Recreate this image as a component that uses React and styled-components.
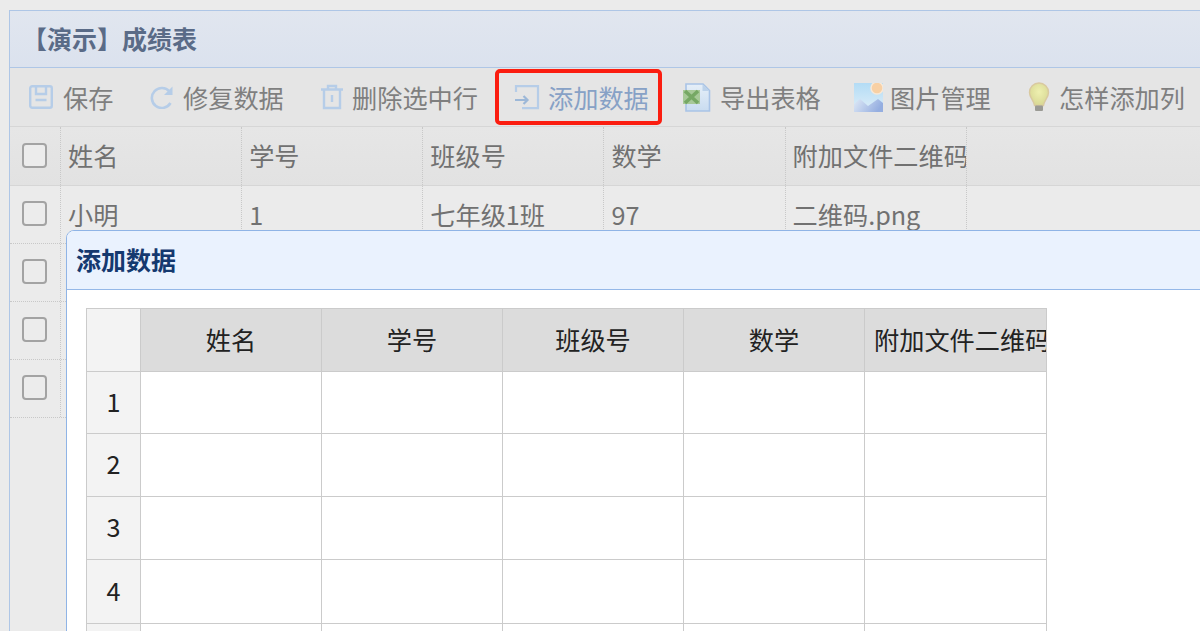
import React from 'react'
import styled, { createGlobalStyle } from 'styled-components'

const FONT = '"Noto Sans CJK SC", "Noto Sans", sans-serif'
const COLUMNS = ['姓名', '学号', '班级号', '数学', '附加文件二维码']
const STUDENT = ['小明', '1', '七年级1班', '97', '二维码.png']
const SHEET_ROWS = [
  { label: '1', height: 62 },
  { label: '2', height: 63 },
  { label: '3', height: 63 },
  { label: '4', height: 64 },
  { label: '', height: 63 },
]

const GlobalStyle = createGlobalStyle`
  html, body {
    margin: 0;
    height: 631px;
    overflow: hidden;
    background: #ebebeb;
    font-family: ${FONT};
  }
`

const Page = styled.div`
  position: relative;
  width: 1200px;
  height: 631px;
  padding: 10px 0 0 9px;
  box-sizing: border-box;
  overflow: hidden;
`

const Panel = styled.div`
  width: 1240px;
  height: 640px;
  box-sizing: border-box;
  border: 1px solid #aec6e6;
  background: #ebebeb;
`

const TitleBar = styled.div`
  height: 57px;
  box-sizing: border-box;
  padding: 0 0 2px 12px;
  display: flex;
  align-items: center;
  border-bottom: 1px solid #aec6e6;
  background: linear-gradient(to bottom, #e1e6ef, #dbe2ee);
  color: #5a6b87;
  font-size: 25px;
  font-weight: 700;
`

const Toolbar = styled.div`
  height: 59px;
  box-sizing: border-box;
  display: flex;
  align-items: center;
  border-bottom: 1px solid #d6d6d6;
  background: #e5e5e5;
`

const ToolButton = styled.div`
  position: relative;
  height: 100%;
  display: flex;
  align-items: center;
  flex: none;
  width: ${(p) => p.$width}px;
  padding-left: ${(p) => p.$pad}px;
  box-sizing: border-box;
  gap: ${(p) => p.$gap}px;
  font-size: 25.2px;
  white-space: nowrap;
  color: ${(p) => (p.$highlight ? '#87a1c6' : '#7f7f7f')};

  ${(p) =>
    p.$highlight &&
    `&::after {
      content: '';
      position: absolute;
      left: 0;
      top: 1px;
      width: 167px;
      height: 56px;
      box-sizing: border-box;
      border: 4px solid #fb1d10;
      border-radius: 5px;
    }`}

  svg {
    flex: none;
  }
`

const GridRow = styled.div`
  height: ${(p) => p.$height}px;
  box-sizing: border-box;
  display: flex;
  border-bottom: ${(p) => (p.$head ? '1px solid #d6d6d6' : '1px dotted #c8c8c8')};
  background: ${(p) => (p.$head ? 'linear-gradient(to bottom, #e6e6e6, #e2e2e2)' : '#ebebeb')};
  font-size: 25.2px;
  color: #717171;
`

const CheckCell = styled.div`
  width: 51px;
  flex: none;
  box-sizing: border-box;
  padding: 0 2px 2px 0;
  display: flex;
  align-items: center;
  justify-content: center;
  border-right: 1px dotted #c8c8c8;
`

const CheckBox = styled.span`
  width: 25px;
  height: 25px;
  box-sizing: border-box;
  border: 2px solid #a3a3a3;
  border-radius: 4px;
  background: #ececec;
`

const DataCell = styled.div`
  width: 181.15px;
  flex: none;
  box-sizing: border-box;
  padding: 0 0 2px 7px;
  display: flex;
  align-items: center;
  border-right: 1px dotted #c8c8c8;
  white-space: nowrap;
  overflow: hidden;
`

const Dialog = styled.div`
  position: absolute;
  left: 66px;
  top: 230px;
  width: 1200px;
  height: 460px;
  box-sizing: border-box;
  border: 1px solid #8fb4e6;
  border-radius: 8px 0 0 0;
  background: #fff;
  overflow: hidden;
`

const DialogTitle = styled.div`
  height: 59px;
  box-sizing: border-box;
  padding: 0 0 2px 9px;
  display: flex;
  align-items: center;
  border-bottom: 1px solid #95b8e8;
  background: #eaf2fe;
  color: #15396f;
  font-size: 25px;
  font-weight: 700;
`

const DialogBody = styled.div`
  padding: 18px 0 0 19px;
`

const Sheet = styled.table`
  border-collapse: collapse;
  table-layout: fixed;
  width: 960px;
  font-size: 25.2px;
  color: #222;
`

const Corner = styled.th`
  width: 54px;
  padding: 0;
  height: 63px;
  box-sizing: border-box;
  border: 1px solid #cbcbcb;
  background: #f3f3f3;
`

const SheetHead = styled.th`
  width: 181px;
  padding: 0 0 3px 10px;
  box-sizing: border-box;
  border: 1px solid #cbcbcb;
  background: #dcdcdc;
  font-weight: 400;
  overflow: hidden;
  white-space: nowrap;
  text-align: center;

  &:not(:last-child) {
    padding-right: 10px;
  }

  &:last-child {
    width: 182px;
    padding-left: 9px;
    text-align: left;
  }
`

const RowHead = styled.td`
  height: ${(p) => p.$height}px;
  padding: 0 0 4px;
  box-sizing: border-box;
  border: 1px solid #cbcbcb;
  background: #f3f3f3;
  text-align: center;
`

const SheetCell = styled.td`
  padding: 0;
  border: 1px solid #cbcbcb;
  background: #fff;
`

const SaveIcon = () => (
  <svg width="24" height="24" viewBox="0 0 24 24" fill="none" stroke="#b6cde8" strokeWidth="2.4">
    <rect x="1.2" y="1.2" width="21.6" height="21.6" rx="2" />
    <path d="M7 1.5v7.5h10V1.5M6.5 15h11" />
  </svg>
)

const RedoIcon = () => (
  <svg width="24" height="24" viewBox="0 0 24 24" fill="none">
    <path d="M19.5 6.5A10 10 0 1 0 20.5 18" stroke="#b6cde8" strokeWidth="2.6" />
    <path d="M22.5 1.5v8.5H14z" fill="#b6cde8" />
  </svg>
)

const TrashIcon = () => (
  <svg width="24" height="26" viewBox="0 0 24 26" fill="none" stroke="#b6cde8" strokeWidth="2.4">
    <path d="M1 5.5h22M8 5V2h8v3M4 6v18h16V6M12 11v7" />
  </svg>
)

const AddIcon = () => (
  <svg width="26" height="26" viewBox="0 0 26 26" fill="none" stroke="#b6cde8" strokeWidth="2.2">
    <path d="M2 8V2.2h22v22H8" />
    <path d="M1 16h12M9.5 12l4 4-4 4" stroke="#9db8d8" />
  </svg>
)

const ExcelIcon = () => (
  <svg width="28" height="29" viewBox="0 0 28 29">
    <defs>
      <linearGradient id="sheet" x1="0" y1="0" x2="0" y2="1">
        <stop offset="0" stopColor="#e6eff8" />
        <stop offset="1" stopColor="#c9dcf0" />
      </linearGradient>
    </defs>
    <path d="M3 1h17l6.500 6.500V28H3z" fill="url(#sheet)" stroke="#a9c4e6" strokeWidth="1.6" />
    <path d="M19.500 1.500v6.500H26z" fill="#bcd2ea" />
    <rect x="0" y="7" width="17" height="14" fill="#a7c998" />
    <path d="M2 8l13 12M15 8L2 20" stroke="#76a864" strokeWidth="3.600" />
  </svg>
)

const ImageIcon = () => (
  <svg width="29" height="29" viewBox="0 0 29 29">
    <defs>
      <linearGradient id="sky" x1="0" y1="0" x2="0" y2="1">
        <stop offset="0" stopColor="#b3dcf5" />
        <stop offset="1" stopColor="#e0eef8" />
      </linearGradient>
      <linearGradient id="hill" x1="0" y1="0" x2="1" y2="0.300">
        <stop offset="0" stopColor="#dfe9f6" />
        <stop offset="1" stopColor="#95aee0" />
      </linearGradient>
    </defs>
    <rect width="29" height="29" fill="url(#sky)" />
    <circle cx="23" cy="5" r="6" fill="#f8d0a4" stroke="#f6e8d8" strokeWidth="1.500" />
    <path d="M0 21l6-5 8 7 10-7 5 4v9H0z" fill="url(#hill)" />
  </svg>
)

const BulbIcon = () => (
  <svg width="22" height="30" viewBox="0 0 22 30">
    <defs>
      <radialGradient id="glass" cx="0.500" cy="0.400" r="0.600">
        <stop offset="0" stopColor="#eef0b0" />
        <stop offset="1" stopColor="#d8d894" />
      </radialGradient>
    </defs>
    <path d="M11 1a9.500 9.500 0 0 0-9.500 9.500c0 5 4 7 5 13h9c1-6 5-8 5-13A9.500 9.500 0 0 0 11 1z" fill="url(#glass)" stroke="#d9c9a0" strokeWidth="1.400" />
    <rect x="7" y="23.500" width="8" height="5.500" rx="1" fill="#9a9a94" />
  </svg>
)

const TOOLS = [
  { label: '保存', icon: <SaveIcon />, width: 120, pad: 19, gap: 10 },
  { label: '修复数据', icon: <RedoIcon />, width: 170, pad: 20, gap: 9 },
  { label: '删除选中行', icon: <TrashIcon />, width: 195, pad: 20, gap: 8 },
  { label: '添加数据', icon: <AddIcon />, width: 187, pad: 19, gap: 8, highlight: true },
  { label: '导出表格', icon: <ExcelIcon />, width: 172, pad: 1, gap: 9 },
  { label: '图片管理', icon: <ImageIcon />, width: 174, pad: 0, gap: 7 },
  { label: '怎样添加列', icon: <BulbIcon />, width: 170, pad: 0, gap: 9 },
]

export default function App() {
  return (
    <Page>
      <GlobalStyle />
      <Panel>
        <TitleBar>【演示】成绩表</TitleBar>
        <Toolbar>
          {TOOLS.map((tool) => (
            <ToolButton
              key={tool.label}
              $width={tool.width}
              $pad={tool.pad}
              $gap={tool.gap}
              $highlight={tool.highlight}
            >
              {tool.icon}
              {tool.label}
            </ToolButton>
          ))}
        </Toolbar>
        <GridRow $head $height={59}>
          <CheckCell><CheckBox /></CheckCell>
          {COLUMNS.map((name) => <DataCell key={name}>{name}</DataCell>)}
        </GridRow>
        {[0, 1, 2, 3].map((row) => (
          <GridRow key={row} $height={58}>
            <CheckCell><CheckBox /></CheckCell>
            {row === 0 && STUDENT.map((value) => <DataCell key={value}>{value}</DataCell>)}
          </GridRow>
        ))}
      </Panel>
      <Dialog>
        <DialogTitle>添加数据</DialogTitle>
        <DialogBody>
          <Sheet>
            <thead>
              <tr>
                <Corner />
                {COLUMNS.map((name) => <SheetHead key={name}>{name}</SheetHead>)}
              </tr>
            </thead>
            <tbody>
              {SHEET_ROWS.map((row, index) => (
                <tr key={index}>
                  <RowHead $height={row.height}>{row.label}</RowHead>
                  {COLUMNS.map((name) => <SheetCell key={name} />)}
                </tr>
              ))}
            </tbody>
          </Sheet>
        </DialogBody>
      </Dialog>
    </Page>
  )
}
